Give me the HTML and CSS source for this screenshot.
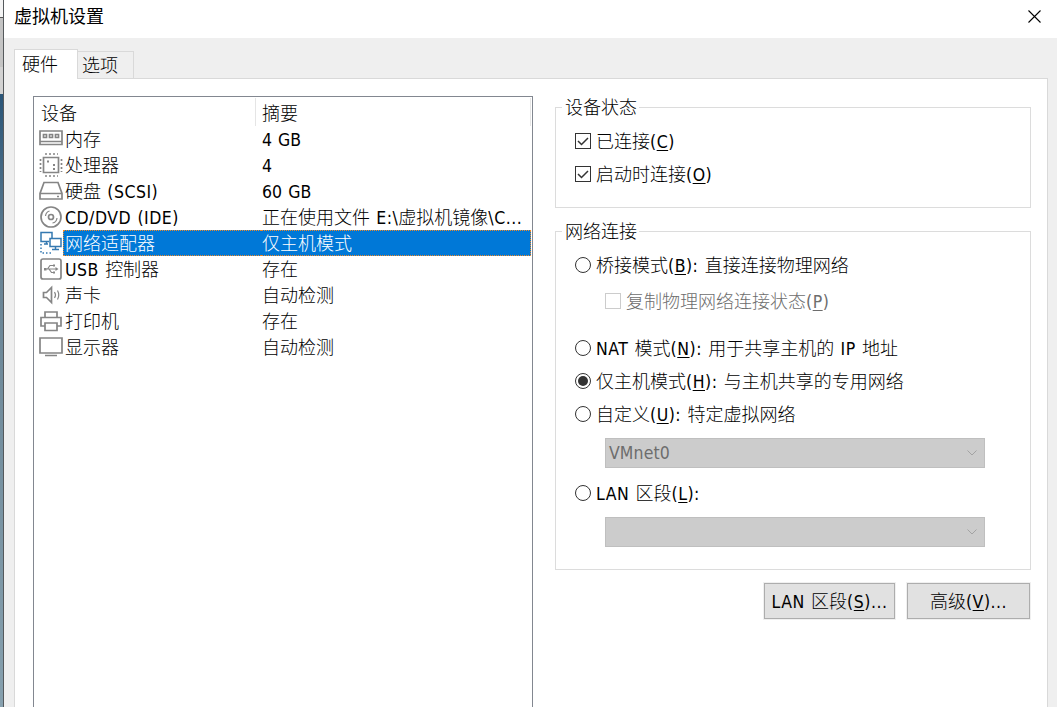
FILE: index.html
```
<!DOCTYPE html>
<html lang="zh-CN">
<head>
    <meta charset="UTF-8">
    <title>虚拟机设置</title>
    <link rel="stylesheet" href="styles.css">
</head>
<body>
    <div class="backdrop"></div>
    <div class="dialog">
        <div class="title-bar">
            <span class="title">虚拟机设置</span>
            <svg class="close" width="13" height="13" viewBox="0 0 13 13"><path d="M.5.5l12 12M12.5.5l-12 12"/></svg>
        </div>
        <div class="tabs">
            <div class="tab active">硬件</div>
            <div class="tab">选项</div>
        </div>
        <div class="panel">
            <div class="device-list">
                <div class="list-header">
                    <div class="col-name">设备</div>
                    <div class="col-summary">摘要</div>
                </div>
                <div class="row">
                    <svg class="icon" viewBox="0 0 24 26"><path d="M1 5h22v13.500H1zM1 15.500h22"/><path d="M4.500 8.500h3v3h-3zM10.500 8.500h3v3h-3zM16.500 8.500h3v3h-3z"/></svg>
                    <div class="name">内存</div><div class="summary num"><b>4 GB</b></div>
                </div>
                <div class="row">
                    <svg class="icon" viewBox="0 0 24 26"><path d="M4.500 5.500h15v15h-15z"/><path stroke-dasharray="2 2" d="M6 2h13M6 24h13M1.500 7v13M22.500 7v13"/><path class="dot" d="M8 8.500h2v2H8zM14 12h2v2h-2zM14 16h2v2h-2z"/></svg>
                    <div class="name">处理器</div><div class="summary num"><b>4</b></div>
                </div>
                <div class="row">
                    <svg class="icon" viewBox="0 0 24 26"><path d="M5 4.500h14l4 11V21H1v-5.500zM1 15.500h22M18 18.500h2"/></svg>
                    <div class="name">硬盘<b> (SCSI)</b></div><div class="summary num"><b>60 GB</b></div>
                </div>
                <div class="row">
                    <svg class="icon" viewBox="0 0 24 26"><circle cx="12" cy="13" r="10"/><circle cx="12" cy="13" r="2.500"/><path class="thin" d="M6.500 12q.5-4 4-5M13.500 19q4-.5 4.500-5"/></svg>
                    <div class="name"><b>CD/DVD (IDE)</b></div><div class="summary">正在使用文件<b> E:\</b>虚拟机镜像<b>\C...</b></div>
                </div>
                <div class="row selected">
                    <svg class="icon" viewBox="0 0 24 26"><path d="M10 11.500H2v-9h11V8M5 14h4M7.500 12v2M11 8.500h11v8H11zM16.500 17v2.500M13 19.500h7"/><path stroke-dasharray="1.500 2" d="M2 14v9h12"/></svg>
                    <div class="name">网络适配器</div><div class="summary">仅主机模式</div>
                </div>
                <div class="row">
                    <svg class="icon" viewBox="0 0 24 26"><rect x="2" y="3" width="20" height="20" rx="2"/><path class="thin" d="M6 13h11M8.500 13L11 9.500h4M10 13l2.500 3.500H15"/><path class="dot" d="M5 12h2.500v2.500H5zM14 8.500h2v2h-2zM14 15.500h2v2h-2zM16.500 11l3 2-3 2z"/></svg>
                    <div class="name"><b>USB </b>控制器</div><div class="summary">存在</div>
                </div>
                <div class="row">
                    <svg class="icon" viewBox="0 0 24 26"><path d="M4.500 10.500h3l5-5v15l-5-5h-3z"/><path class="thin" d="M15.500 10q2 3 0 6M18.500 8.500q2.500 4.500 0 9"/></svg>
                    <div class="name">声卡</div><div class="summary">自动检测</div>
                </div>
                <div class="row">
                    <svg class="icon" viewBox="0 0 24 26"><path d="M6 9V4h12v5M6 18H2V9.500h20V18h-4M6 15h12v7.500H6z"/></svg>
                    <div class="name">打印机</div><div class="summary">存在</div>
                </div>
                <div class="row">
                    <svg class="icon" viewBox="0 0 24 26"><path d="M1 4h22v15H1zM6 21.500h12"/></svg>
                    <div class="name">显示器</div><div class="summary">自动检测</div>
                </div>
            </div>

            <div class="settings">
                <fieldset class="group status">
                    <legend>设备状态</legend>
                    <label class="option"><i class="check"><svg viewBox="0 0 16 16"><path d="M3 8l3.500 3.500L13 5"/></svg></i><span>已连接<b>(<u>C</u>)</b></span></label>
                    <label class="option"><i class="check"><svg viewBox="0 0 16 16"><path d="M3 8l3.500 3.500L13 5"/></svg></i><span>启动时连接<b>(<u>O</u>)</b></span></label>
                </fieldset>
                <fieldset class="group network">
                    <legend>网络连接</legend>
                    <label class="option"><i class="radio"></i><span>桥接模式<b>(<u>B</u>): </b>直接连接物理网络</span></label>
                    <label class="option sub disabled"><i class="check"></i><span>复制物理网络连接状态<b>(<u>P</u>)</b></span></label>
                    <label class="option"><i class="radio"></i><span><b>NAT </b>模式<b>(<u>N</u>): </b>用于共享主机的<b> IP </b>地址</span></label>
                    <label class="option"><i class="radio on"></i><span>仅主机模式<b>(<u>H</u>): </b>与主机共享的专用网络</span></label>
                    <label class="option"><i class="radio"></i><span>自定义<b>(<u>U</u>): </b>特定虚拟网络</span></label>
                    <div class="combo num"><b>VMnet0</b><svg width="10" height="6" viewBox="0 0 10 6"><path d="M.5.5L5 5 9.500.5"/></svg></div>
                    <label class="option"><i class="radio"></i><span><b>LAN </b>区段<b>(<u>L</u>):</b></span></label>
                    <div class="combo"><b></b><svg width="10" height="6" viewBox="0 0 10 6"><path d="M.5.5L5 5 9.500.5"/></svg></div>
                </fieldset>
                <div class="buttons">
                    <button class="btn lan-btn"><b>LAN </b>区段<b>(<u>S</u>)...</b></button>
                    <button class="btn adv-btn">高级<b>(<u>V</u>)...</b></button>
                </div>
            </div>
        </div>
    </div>
</body>
</html>
```
FILE: styles.css
```
* {
    box-sizing: border-box;
}
body {
    margin: 0;
    height: 707px;
    overflow: hidden;
    display: flex;
    font-family: "Noto Sans CJK SC", sans-serif;
    font-size: 18px;
    font-weight: 300;
    line-height: 20px;
    color: #000;
}
b {
    font-family: "DejaVu Sans Condensed", "DejaVu Sans", sans-serif;
    font-stretch: condensed;
    font-size: 17.5px;
    font-weight: 400;
    letter-spacing: .5px;
    word-spacing: .8px;
    white-space: pre;
}
.num b {
    letter-spacing: .1px;
    word-spacing: .8px;
}
u {
    text-underline-offset: 2px;
    text-decoration-thickness: 1px;
}
.backdrop {
    width: 4px;
    border-right: 1px solid #55595c;
    background: linear-gradient(#f4f4f4 17px, #555 17px, #555 18px, #c4c4c4 18px, #c4c4c4 67px, #d2d2d2 67px, #d2d2d2 94px, #2a5578 94px, #6a8596 280px, #86a0ae 707px);
}
.dialog {
    flex: 1;
    display: flex;
    flex-direction: column;
    background: #efefef;
}
.title-bar {
    height: 38px;
    background: #fff;
    display: flex;
    justify-content: space-between;
    padding: 6px 16px 0 10px;
}
.title {
    font-weight: 400;
    margin-top: -1px;
}
.close {
    margin-top: 4px;
    fill: none;
    stroke: #000;
    stroke-width: 1.1;
}
.tabs {
    height: 40px;
    padding-left: 10px;
    display: flex;
    align-items: flex-end;
}
.tab {
    width: 56px;
    height: 27px;
    border: 1px solid #d9d9d9;
    border-width: 1px 1px 0 0;
    padding: 2px 0 0 4px;
}
.tab.active {
    width: 64px;
    height: 30px;
    margin-bottom: -1px;
    border-left-width: 1px;
    background: #fff;
    padding: 3px 0 0 7px;
    z-index: 1;
}
.panel {
    flex: 1;
    margin: 0 9px 0 10px;
    border: 1px solid #d9d9d9;
    border-bottom: 0;
    background: #fff;
    display: flex;
    padding: 17px 16px 0 18px;
}
.device-list {
    width: 500px;
    border: 1px solid #828790;
    border-bottom: 0;
    padding: 1px 1px 0 5px;
}
.list-header {
    height: 28px;
    display: flex;
    border-right: 1px solid #e5e5e5;
}
.col-name {
    width: 217px;
    padding: 4px 0 0 2px;
    border-right: 1px solid #e5e5e5;
}
.col-summary {
    padding: 4px 0 0 6px;
}
.row {
    height: 26px;
    display: flex;
    line-height: 25px;
    white-space: nowrap;
}
.icon {
    width: 24px;
    height: 26px;
    fill: none;
    stroke: #858585;
    stroke-width: 1.7;
}
.icon .thin {
    stroke-width: 1.2;
}
.icon .dot {
    fill: #858585;
    stroke: none;
}
.name {
    width: 198px;
    padding-left: 2px;
}
.summary {
    flex: 1;
    padding-left: 1px;
}
.selected .name,
.selected .summary {
    background: #0078d7;
    border: 1px dotted #f08a28;
    color: #fff;
    line-height: 23px;
}
.selected .name {
    border-right: 0;
    padding-left: 1px;
}
.selected .summary {
    border-left: 0;
}
.selected .icon {
    stroke: #3579b1;
    stroke-width: 1.5;
}
.settings {
    width: 476px;
    margin: 2px 0 0 22px;
}
.group {
    margin: 0;
    border: 1px solid #dcdcdc;
    padding: 7px 45px 0 19px;
}
.group legend {
    height: 19px;
    line-height: 17px;
    margin-left: -13px;
    padding: 0 2px 0 3px;
}
.status {
    height: 110px;
}
.network {
    height: 348px;
    margin-top: 14px;
}
.option {
    height: 33px;
    display: flex;
    align-items: center;
    gap: 5px;
    white-space: nowrap;
}
.check,
.radio {
    width: 16px;
    height: 16px;
    border: 1px solid #333;
    display: flex;
    align-items: center;
    justify-content: center;
}
.check svg {
    width: 16px;
    height: 16px;
    flex: none;
    fill: none;
    stroke: #333;
    stroke-width: 1.5;
}
.radio {
    border-radius: 50%;
}
.radio.on::after {
    content: "";
    width: 10px;
    height: 10px;
    border-radius: 50%;
    background: #333;
}
.sub {
    margin: 3px 0 14px 30px;
}
.disabled {
    color: #6d6d6d;
}
.disabled .check {
    border-color: #ccc;
}
.combo {
    height: 30px;
    margin: 8px 0 8px 30px;
    border: 1px solid #bfbfbf;
    background: #ccc;
    color: #6d6d6d;
    display: flex;
    align-items: center;
    justify-content: space-between;
    padding: 0 7px 0 3px;
}
.combo svg {
    fill: none;
    stroke: #a3a3a3;
}
.buttons {
    display: flex;
    justify-content: flex-end;
    gap: 12px;
    margin: 13px 1px 0 0;
}
.btn {
    height: 36px;
    border: 1px solid #adadad;
    outline: 1px solid #f0f0f0;
    background: #e1e1e1;
    font: inherit;
    color: #000;
    padding: 0;
    white-space: nowrap;
}
.lan-btn {
    width: 131px;
}
.adv-btn {
    width: 123px;
}
```
